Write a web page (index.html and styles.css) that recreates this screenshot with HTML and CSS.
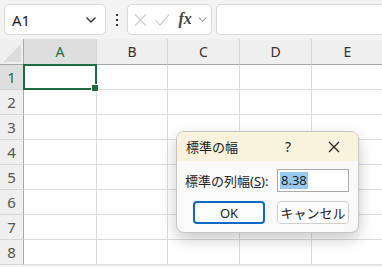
FILE: index.html
```html
<!DOCTYPE html>
<html lang="ja">
<head>
    <meta charset="UTF-8">
    <title>標準の幅</title>
    <link rel="stylesheet" href="styles.css">
</head>
<body>
    <div class="toolbar">
        <div class="namebox">
            <span class="ref">A1</span>
            <svg class="chev" width="12" height="8" viewBox="0 0 12 8"><path d="M1.5 1.5 L6 6 L10.5 1.5" fill="none" stroke="#333" stroke-width="1.4"/></svg>
        </div>
        <div class="dots"><i></i><i></i><i></i></div>
        <div class="fxbox">
            <svg width="16" height="16" viewBox="0 0 16 16"><path d="M2 2 L14 14 M14 2 L2 14" stroke="#c8c8c8" stroke-width="1.2"/></svg>
            <svg width="18" height="16" viewBox="0 0 18 16"><path d="M1.5 8 L6.5 13.5 L16.5 2" fill="none" stroke="#c8c8c8" stroke-width="1.2"/></svg>
            <span class="fx">fx</span>
            <svg width="10" height="7" viewBox="0 0 10 7"><path d="M1 1.5 L5 5.5 L9 1.5" fill="none" stroke="#9a9a9a" stroke-width="1.1"/></svg>
        </div>
        <div class="formula"></div>
    </div>

    <div class="sheet">
        <div class="corner">
            <svg width="18" height="18" viewBox="0 0 18 18"><polygon points="18,0 18,18 0,18" fill="#dcdcdc"/></svg>
        </div>
        <div class="colhead active">A</div>
        <div class="colhead">B</div>
        <div class="colhead">C</div>
        <div class="colhead">D</div>
        <div class="colhead">E</div>

        <div class="rowhead active">1</div>
        <div class="cell selected"><span class="handle"></span></div>
        <div class="cell"></div><div class="cell"></div><div class="cell"></div><div class="cell"></div>

        <div class="rowhead">2</div>
        <div class="cell"></div><div class="cell"></div><div class="cell"></div><div class="cell"></div><div class="cell"></div>
        <div class="rowhead">3</div>
        <div class="cell"></div><div class="cell"></div><div class="cell"></div><div class="cell"></div><div class="cell"></div>
        <div class="rowhead">4</div>
        <div class="cell"></div><div class="cell"></div><div class="cell"></div><div class="cell"></div><div class="cell"></div>
        <div class="rowhead">5</div>
        <div class="cell"></div><div class="cell"></div><div class="cell"></div><div class="cell"></div><div class="cell"></div>
        <div class="rowhead">6</div>
        <div class="cell"></div><div class="cell"></div><div class="cell"></div><div class="cell"></div><div class="cell"></div>
        <div class="rowhead">7</div>
        <div class="cell"></div><div class="cell"></div><div class="cell"></div><div class="cell"></div><div class="cell"></div>
        <div class="rowhead">8</div>
        <div class="cell"></div><div class="cell"></div><div class="cell"></div><div class="cell"></div><div class="cell"></div>
    </div>

    <div class="dialog">
        <div class="dialog-title">
            <span class="title-text">標準の幅</span>
            <span class="help">?</span>
            <svg class="close" width="12" height="12" viewBox="0 0 12 12"><path d="M1 1 L11 11 M11 1 L1 11" stroke="#222" stroke-width="1.2"/></svg>
        </div>
        <div class="dialog-body">
            <div class="field">
                <label for="width">標準の列幅(<u>S</u>):</label>
                <div class="input" id="width"><span class="sel">8.38</span></div>
            </div>
            <div class="buttons">
                <button class="btn primary">OK</button>
                <button class="btn">キャンセル</button>
            </div>
        </div>
    </div>
</body>
</html>
```

FILE: styles.css
```css
* {
    box-sizing: border-box;
    margin: 0;
    padding: 0;
}

body {
    width: 382px;
    height: 267px;
    overflow: hidden;
    background-color: #f3f3f3;
    font-family: "Noto Sans", "Noto Sans CJK JP", sans-serif;
    color: #222;
    position: relative;
}

.toolbar {
    height: 40px;
    display: flex;
    align-items: flex-start;
    padding: 4px 0 0 4px;
}

.namebox {
    width: 102px;
    height: 31px;
    background-color: #fff;
    border: 1px solid #d9d9d9;
    border-radius: 5px;
    display: flex;
    align-items: center;
    justify-content: space-between;
    padding: 0 8px 0 7px;
}

.ref {
    font-size: 15px;
    color: #222;
}

.dots {
    width: 21px;
    height: 31px;
    display: flex;
    flex-direction: column;
    align-items: center;
    justify-content: center;
    gap: 3px;
}

.dots i {
    display: block;
    width: 2px;
    height: 2px;
    background-color: #333;
}

.fxbox {
    width: 85px;
    height: 31px;
    background-color: #fff;
    border: 1px solid #d9d9d9;
    border-radius: 5px;
    display: flex;
    align-items: center;
    padding: 0 4px 0 5px;
    gap: 6px;
}

.fx {
    font-family: "Liberation Serif", serif;
    font-style: italic;
    font-weight: bold;
    font-size: 16px;
    color: #444;
    margin-left: 2px;
    margin-top: -2px;
}

.formula {
    flex: 1;
    height: 31px;
    margin-left: 4px;
    background-color: #fff;
    border: 1px solid #d9d9d9;
    border-right: none;
    border-radius: 5px 0 0 5px;
}

.sheet {
    display: grid;
    grid-template-columns: 24px 73px 71px 72px 72px 72px;
    grid-template-rows: 26px repeat(8, 25px);
    margin-top: -1px;
    background-color: #fff;
}

.corner {
    background-color: #efefef;
    border-bottom: 1px solid #a8a8a8;
    border-right: 1px solid #a8a8a8;
    display: flex;
    align-items: flex-end;
    justify-content: flex-end;
    padding: 0 2px 2px 0;
}

.colhead {
    background-color: #efefef;
    border-bottom: 1px solid #a8a8a8;
    border-right: 1px solid #d6d6d6;
    font-size: 14px;
    color: #333;
    display: flex;
    align-items: center;
    justify-content: center;
}

.rowhead {
    background-color: #efefef;
    border-right: 1px solid #a8a8a8;
    border-bottom: 1px solid #d6d6d6;
    font-size: 15px;
    color: #555;
    display: flex;
    align-items: center;
    justify-content: center;
}

.colhead.active, .rowhead.active {
    background-color: #dedede;
    color: #1d6b47;
}

.cell {
    border-right: 1px solid #dcdcdc;
    border-bottom: 1px solid #dcdcdc;
}

.cell.selected {
    position: relative;
    border: 2px solid #1e6b41;
    margin: -1px 0 0 -1px;
}

.handle {
    position: absolute;
    right: -4px;
    bottom: -4px;
    width: 6px;
    height: 6px;
    background-color: #1e6b41;
    border: 1px solid #fff;
    box-sizing: content-box;
}

.dialog {
    position: absolute;
    left: 176px;
    top: 131px;
    width: 183px;
    height: 102px;
    border: 1px solid #c6c6c6;
    border-radius: 8px;
    overflow: hidden;
    background-color: #f9f9f9;
    box-shadow: 0 6px 16px rgba(0, 0, 0, 0.22);
}

.dialog-title {
    height: 29px;
    background-color: #f9f3dd;
    display: flex;
    align-items: center;
    padding: 0 0 0 9px;
}

.title-text {
    font-size: 13px;
    flex: 1;
}

.help {
    font-size: 14px;
    width: 24px;
    text-align: center;
    margin-right: 28px;
}

.close {
    margin-right: 18px;
}

.dialog-body {
    padding: 8px 9px 0 8px;
}

.field {
    display: flex;
    align-items: center;
    justify-content: space-between;
}

.field label {
    font-size: 13px;
    color: #222;
}

.input {
    width: 72px;
    height: 23px;
    background-color: #fff;
    border: 1px solid #a9a9a9;
    display: flex;
    align-items: center;
    padding-left: 2px;
}

.sel {
    background-color: #99c8ef;
    font-size: 13px;
    line-height: 17px;
    padding: 0 1px;
}

.buttons {
    display: flex;
    justify-content: flex-end;
    gap: 12px;
    margin-top: 9px;
}

.btn {
    width: 72px;
    height: 23px;
    background-color: #fdfdfd;
    border: 1px solid #cfcfcf;
    border-radius: 4px;
    font-family: "Noto Sans", "Noto Sans CJK JP", sans-serif;
    font-size: 13px;
    color: #222;
}

.btn.primary {
    border: 2px solid #0b6bc4;
}
```
